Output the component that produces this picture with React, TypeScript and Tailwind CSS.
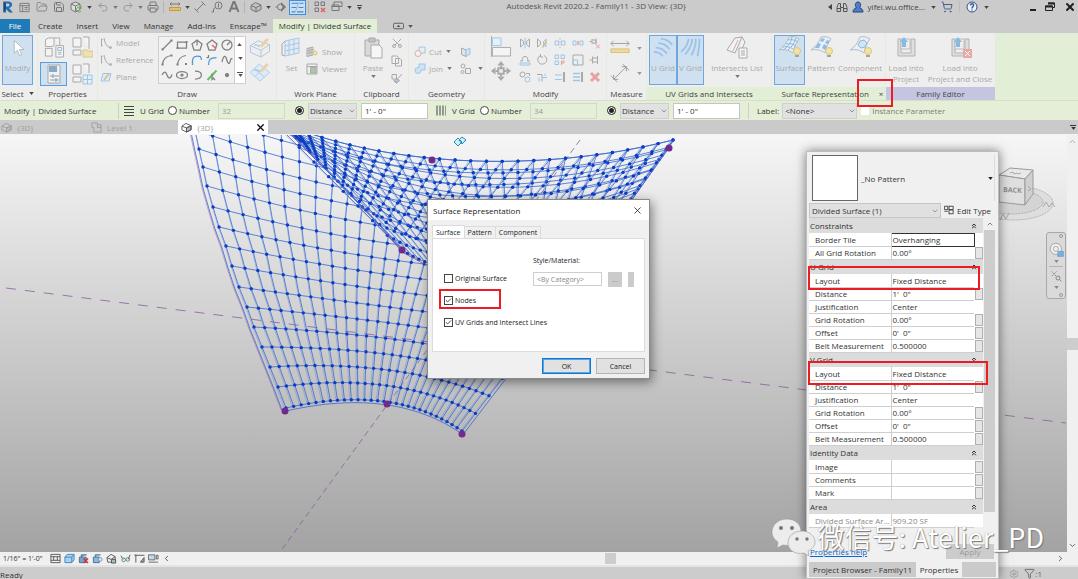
import React, { useState } from 'react';
import { Check, ChevronDown, ChevronUp, ChevronsUp, ChevronLeft, ChevronRight, Filter, FolderOpen, Printer, Redo2, Save, Scissors, Settings, ShoppingCart, Undo2, X } from 'lucide-react';

type Point = [number, number];

/* ---------- small helpers ---------- */

function Ico({ className = 'w-3 h-3', children, box = 24 }: { className?: string; children: React.ReactNode; box?: number }) {
  return (
    <svg viewBox={`0 0 ${box} ${box}`} className={`shrink-0 ${className}`} fill="none" stroke="currentColor" strokeWidth="2">
      {children}
    </svg>
  );
}

function Caret({ className = 'w-2' }: { className?: string }) {
  return (
    <span className={`flex shrink-0 justify-center ${className}`}>
      <svg viewBox="0 0 6 4" className="w-[5px] h-[3px]" fill="currentColor"><path d="M0 0h6L3 4z" /></svg>
    </span>
  );
}

function Separator() {
  return <span className="mx-[2px] h-3 w-px shrink-0 bg-[#b4b4b4]" />;
}

/* ---------- title bar ---------- */

function Tool({ label, active, children }: { label: string; active?: boolean; children: React.ReactNode }) {
  return (
    <button
      aria-label={label}
      className={`flex h-[15px] w-[17px] shrink-0 items-center justify-center ${active ? 'border border-[#3d8fdc] bg-[#c9e0f4]' : ''}`}
    >
      {children}
    </button>
  );
}

function TitleBar() {
  return (
    <header className="flex h-[19px] shrink-0 items-start justify-between text-[#777]">
      <div className="flex h-[14px] items-center">
        <button aria-label="Revit" className="flex w-4 items-center pl-[2px]">
          <Ico className="h-3 w-3">
            <path d="M3 1v22h5v-7l7 7h7l-8-9c9-2 8-13-1-13z" fill="#1f6fb5" stroke="none" />
            <path d="M8 5v6h4c4 0 4-6 0-6z" fill="#cbcbcb" stroke="none" />
            <path d="M3 1l5 4v11l-5 7z" fill="#114a86" stroke="none" />
          </Ico>
        </button>
        <Tool label="Home">
          <Ico className="h-[11px] w-[11px]"><path d="M2 3h20v18H2zM2 8h20M8 8v13M12 12h7M12 16h7" /></Ico>
        </Tool>
        <Tool label="Open"><FolderOpen className="h-3 w-3" strokeWidth={1.5} /></Tool>
        <Tool label="Save"><Save className="h-3 w-3" /></Tool>
        <Tool label="Synchronize">
          <Ico className="h-3 w-3"><path d="M11 2l9 4v11l-9 5-9-5V6z" fill="#ddd" /><path d="M2 6l9 4 9-4M11 10v11" /><path d="M22 14a5 5 0 1 0 0 6M22 10v5h-4" stroke="#6aa84f" /></Ico>
        </Tool>
        <Caret className="w-[10px] text-[#444]" />
        <Tool label="Undo"><Undo2 className="h-3 w-3 text-[#999]" /></Tool>
        <Caret />
        <Tool label="Redo"><Redo2 className="h-3 w-3 text-[#999]" /></Tool>
        <Caret />
        <Tool label="Print"><Printer className="h-3 w-3" /></Tool>
        <Separator />
        <Tool label="Measure">
          <Ico><path d="M2 6h20M5 3L2 6l3 3M19 3l3 3-3 3" /><path d="M1 13h22v6H1z" fill="#e3c06a" stroke="#c39a3c" /></Ico>
        </Tool>
        <Caret className="w-2 text-[#444]" />
        <Tool label="Aligned dimension"><Ico><path d="M4 20L20 4M1 15l8 8M15 1l8 8" /></Ico></Tool>
        <Tool label="Tag"><Ico><circle cx="15" cy="9" r="7" /><path d="M15 5v8M9 13l-4 3v6H1" /></Ico></Tool>
        <Tool label="Text"><Ico><path d="M3 22L11 2h2l8 20M7 15h10" strokeWidth="4" /></Ico></Tool>
        <Separator />
        <Tool label="Default 3D view"><Ico><path d="M2 9l9-6 11 5v9l-10 5L2 17zM2 9l10 4 10-5M12 13v9" fill="#bdbdbd" /></Ico></Tool>
        <Caret className="w-2 text-[#444]" />
        <Tool label="Section"><Ico><circle cx="11" cy="12" r="6" /><path d="M12 2l10 10-10 10z" fill="currentColor" stroke="none" /><circle cx="11" cy="12" r="4" fill="#cbcbcb" stroke="none" /><path d="M1 12h4" /></Ico></Tool>
        <Tool label="Thin lines" active>
          <Ico className="h-[13px] w-[13px]"><path d="M1 4h12M1 12h9M1 20h6M16 4h7M14 12h9M11 20h12" stroke="#4b87c0" /><path d="M15 2L7 22" stroke="#5b9bd5" strokeWidth="1" /></Ico>
        </Tool>
        <Separator />
        <Tool label="Close inactive views"><Ico><path d="M2 2h7v7H2zM14 2h7v7h-7zM2 14h7v7H2z" /><path d="M14 14l8 8M22 14l-8 8" stroke="#e06060" strokeWidth="3" /></Ico></Tool>
        <Tool label="Switch windows"><Ico><path d="M6 2h16v9H6zM2 8h14v11H2zM2 11h14" fill="#ccc" /></Ico></Tool>
        <Caret className="w-2 text-[#444]" />
        <span className="flex w-3 flex-col items-center text-[#444]">
          <span className="mb-px h-px w-[5px] bg-[#444]" />
          <Caret />
        </span>
      </div>
      <h1 className="h-[12px] text-[8px] leading-[11px] text-[#555]">Autodesk Revit 2020.2 - Family11 - 3D View: {'{3D}'}</h1>
      <div className="flex h-[14px] items-center gap-1 pr-[2px] text-[#444]">
        <svg viewBox="0 0 4 6" className="h-[6px] w-1" fill="currentColor"><path d="M4 0v6L0 3z" /></svg>
        <button aria-label="Search">
          <Ico><path d="M5 5l-3 8v8h7v-8h6v8h7v-8l-3-8h-4v8M5 5h4v8M2 15h7M15 15h7" stroke="#555" /></Ico>
        </button>
        <button className="flex items-center gap-1 text-[8px] leading-[12px]">
          <Ico><path d="M12 2c7 0 6 9 3 12 4 1 7 3 7 8H2c0-5 3-7 7-8C6 11 5 2 12 2z" fill="#4a7fd0" stroke="#2b3f77" /></Ico>
          yifei.wu.office...
          <Caret />
        </button>
        <button aria-label="App store"><ShoppingCart className="h-3 w-3 text-[#4a5f8f]" /></button>
        <span className="mx-[2px] h-3 w-px bg-[#bdbdbd]" />
        <button aria-label="Help">
          <Ico><circle cx="12" cy="12" r="10" fill="#f3f3f3" stroke="#34507e" /><path d="M9 9c0-5 7-4 6 0 0 2-3 2-3 6M12 17v2" stroke="#2263b8" strokeWidth="3" /></Ico>
        </button>
        <Caret />
        <button aria-label="Minimize" className="ml-9 mt-[6px] h-[2px] w-[6px] bg-[#222]" />
        <button aria-label="Restore" className="ml-1 text-[#222]"><Ico className="h-3 w-3"><path d="M8 4h13v9h-4M3 10h14v9H3z" /><path d="M8 5h13M3 11h14" strokeWidth="4" /></Ico></button>
        <button aria-label="Close" className="ml-1 text-[#222]"><X className="h-3 w-3" strokeWidth={4} /></button>
      </div>
    </header>
  );
}

/* ---------- ribbon ---------- */

function RibbonTabs() {
  const tabs = ['Create', 'Insert', 'View', 'Manage', 'Add-Ins', 'Enscape™'];
  return (
    <nav className="flex h-[14px] shrink-0 items-stretch text-[8px] leading-[14px] text-[#333]">
      <button className="w-[30px] bg-[#1e7bb8] text-white">File</button>
      <div className="flex gap-[14px] pl-2 pr-[6px]">
        {tabs.map((tab) => <button key={tab}>{tab}</button>)}
      </div>
      <button className="bg-[#e3eed6] px-[6px]">Modify | Divided Surface</button>
      <button aria-label="Ribbon display" className="ml-4 flex items-center gap-[2px] text-[#555]">
        <Ico className="h-3 w-[11px]"><rect x="1" y="6" width="22" height="12" rx="3" /><path d="M8 14h8l-4-5z" fill="currentColor" stroke="none" /></Ico>
        <Caret />
      </button>
    </nav>
  );
}

interface PanelProps {
  title: React.ReactNode;
  width: string;
  tone?: 'plain' | 'green' | 'violet';
  children: React.ReactNode;
}

function Panel({ title, width, tone = 'plain', children }: PanelProps) {
  const tones = { plain: '', green: 'bg-[#e3eed6]', violet: 'bg-[#c5c5e2]' };
  return (
    <section className={`relative flex shrink-0 flex-col border-r border-[#e6ebe0] bg-[#eeeeee] ${width}`}>
      <div className="flex h-[54px] gap-[2px] px-[2px] pt-[2px] text-[#a9a9a9]">{children}</div>
      <h2 className={`flex h-[13px] items-center justify-center whitespace-nowrap text-[8px] text-[#444] ${tones[tone]}`}>{title}</h2>
    </section>
  );
}

function BigButton({ icon, label, active, caret, width }: { icon: React.ReactNode; label: React.ReactNode; active?: boolean; caret?: boolean; width: string }) {
  return (
    <button
      className={`flex h-[50px] shrink-0 flex-col items-center whitespace-nowrap border text-[8px] leading-[11px] ${width} ${
        active ? 'border-[#6ea6de] bg-[#cfe0f0]' : 'border-transparent'
      }`}
    >
      <span className="mb-[3px] flex h-[23px] items-center">{icon}</span>
      {label}
      {caret && <Caret className="mt-[2px] text-[#777]" />}
    </button>
  );
}

const drawTools: { name: string; art: React.ReactNode }[] = [
  { name: 'Line', art: <><path d="M3 21L21 3" /><path d="M1 19h4v4H1zM19 1h4v4h-4z" fill="currentColor" stroke="none" /></> },
  { name: 'Rectangle', art: <><path d="M3 6h18v12H3z" /><path d="M1 16h4v4H1zM19 4h4v4h-4z" fill="currentColor" stroke="none" /></> },
  { name: 'Inscribed polygon', art: <path d="M12 2l10 8-4 12H6L2 10zM12 4v9" /> },
  { name: 'Circumscribed polygon', art: <><path d="M12 2l10 8-4 12H6L2 10z" /><path d="M12 12l8 7" stroke="#e06060" /></> },
  { name: 'Circle', art: <><circle cx="12" cy="12" r="10" /><path d="M12 12l6-6" /></> },
  { name: 'Start-end arc', art: <><path d="M3 21C4 12 10 4 21 3" /><path d="M1 19h4v4H1zM19 1h4v4h-4z" fill="currentColor" stroke="none" /></> },
  { name: 'Center-ends arc', art: <><path d="M3 21C4 12 10 4 20 3" /><path d="M18 18h4v4h-4zM1 19h4v4H1z" fill="currentColor" stroke="none" /></> },
  { name: 'Tangent arc', art: <path d="M3 22C2 10 4 4 12 4s8 2 9 8" stroke="#4f96d6" /> },
  { name: 'Fillet arc', art: <><path d="M5 22C5 12 8 7 21 7" stroke="#4f96d6" /><path d="M5 2v5h-4" /></> },
  { name: 'Spline', art: <path d="M2 16C5 2 9 2 11 10s5 12 7 6 1-8 5-6" /> },
  { name: 'Spline through points', art: <path d="M2 12C7 3 10 6 12 12s6 10 10-1" /> },
  { name: 'Ellipse', art: <><ellipse cx="12" cy="12" rx="11" ry="7" /><circle cx="12" cy="12" r="2" fill="currentColor" /></> },
  { name: 'Partial ellipse', art: <path d="M8 4c17 0 17 16 0 16" /> },
  { name: 'Pick lines', art: <><path d="M3 22L21 3" stroke="#62c462" strokeWidth="4" /><path d="M12 9v12l3-3 3 4" /></> },
  { name: 'Point', art: <circle cx="12" cy="12" r="3" fill="currentColor" /> },
];

function SurfaceArt({ pattern }: { pattern: 'grid' | 'tiles' | 'part' }) {
  return (
    <Ico className="h-[23px] w-[23px]" box={23}>
      <path d="M11 1c4-1 7 0 10 2-3 4-5 8-6 14-4-3-8-4-14-3C6 11 9 6 11 1z" fill="#e9eff4" stroke="#b4bcc4" strokeWidth="1" />
      {pattern === 'grid' && <path d="M10 4c4-1 7 0 10 2M8 8c4-1 7 0 10 2M5 11c4-1 8 0 11 3M14 1c-1 6-4 10-9 13M18 2c-2 5-4 9-8 12" stroke="#86b8e0" strokeWidth="1" />}
      {pattern === 'tiles' && <path d="M12 2l3 1-2 3-3-1zM17 4l3 1-2 3-3-1zM8 7l3 1-2 4-4 0zM14 8l3 2-2 4-3-2z" fill="#8dbde4" stroke="none" />}
      {pattern === 'part' && <path d="M11 5l4-1 3 3-2 4-4 1-3-3z" fill="#d3e5f4" stroke="#86b8e0" strokeWidth="1" />}
      <circle cx="19" cy="15" r="3.5" fill="#f3e3a4" stroke="#d9c67c" strokeWidth="1" />
      <path d="M17 20h4" stroke="#a5a5a5" />
    </Ico>
  );
}

function LoadArt({ close }: { close?: boolean }) {
  return (
    <Ico className="h-[23px] w-[23px]" box={23}>
      <path d="M3 3h3v14h10V3h4v17H3z" fill="#dedede" stroke="#b3b3b3" strokeWidth="1" />
      <path d="M6 3h9v10H6z" fill="#ededed" stroke="#bdbdbd" strokeWidth="1" />
      <path d="M9 1l4 5h-2v5H7V6H5z" fill="#84bce4" stroke="none" />
      {close && <><path d="M14 13h9v9h-9z" fill="#e6a9a4" stroke="none" /><path d="M16 15l5 5M21 15l-5 5" stroke="#fff" strokeWidth="1" /></>}
    </Ico>
  );
}

const modifyTools: { name: string; art: React.ReactNode }[] = [
  { name: 'Mirror pick axis', art: <><path d="M3 4v16l6-5V9zM21 4v16l-6-5V9z" /><path d="M12 1v22" stroke="#9cc6e6" /></> },
  { name: 'Mirror draw axis', art: <><path d="M3 4v16l6-5V9z" /><path d="M20 4v16l-5-5V9z" stroke="#9cc6e6" /><path d="M13 21l8-14" stroke="#d9b878" strokeWidth="3" /></> },
  { name: 'Split element', art: <><path d="M2 8h7v8H2zM15 8h7v8h-7z" stroke="#9cc6e6" /><path d="M12 2v20" strokeDasharray="3 3" stroke="#e7a0a0" /></> },
  { name: 'Split with gap', art: <><path d="M2 8h6v8H2zM16 8h6v8h-6z" stroke="#9cc6e6" /><path d="M12 8v8" stroke="#e7a0a0" strokeWidth="3" /></> },
  { name: 'Unpin', art: <><path d="M1 9h5M6 4v10M6 6h8v6H6M14 3v12" /><path d="M14 15l8 8M22 15l-8 8" stroke="#e7a0a0" /></> },
  { name: 'Offset', art: <><path d="M2 18h20v4H2z" stroke="#9cc6e6" /><path d="M2 14h5c-4-12 14-12 10 0h5" /></> },
  { name: 'Rotate', art: <><path d="M9 3a9 9 0 1 0 7 0" /><path d="M9 0v6h5" /></> },
  { name: 'Array', art: <><path d="M2 2h7v7H2zM14 2h7v7h-7zM2 14h7v7H2z" stroke="#9cc6e6" /><path d="M15 22v-8h5v4h-5" stroke="#e7a090" /></> },
  { name: 'Scale', art: <><path d="M2 2h20v20H2z" /><path d="M2 12h9v10H2z" stroke="#9cc6e6" /></> },
  { name: 'Pin', art: <path d="M1 12h6M7 5v14M7 8h10v8H7M17 4v16" /> },
  { name: 'Copy', art: <><circle cx="7" cy="7" r="5" /><circle cx="17" cy="17" r="5" stroke="#9cc6e6" /><path d="M14 5h7v5" /></> },
  { name: 'Trim corner', art: <><path d="M2 7h10v14" /><path d="M12 13h10M6 13v8M18 5v5" stroke="#9cc6e6" /></> },
  { name: 'Trim single', art: <><path d="M20 2v20" strokeWidth="4" /><path d="M2 8h14M2 17h14" stroke="#9cc6e6" /></> },
  { name: 'Trim multiple', art: <><path d="M20 2v20" strokeWidth="4" /><path d="M2 5h14M2 12h14M2 19h14" stroke="#9cc6e6" strokeWidth="3" /></> },
  { name: 'Delete', art: <path d="M4 4l16 16M20 4L4 20" stroke="#e8a0a0" strokeWidth="6" /> },
];

function Ribbon() {
  return (
    <div className="flex h-[67px] shrink-0 bg-[#e3eed6]">
      <Panel width="w-[38px]" title={<span className="flex items-center gap-1">Select <Caret /></span>}>
        <BigButton
          active
          width="w-[31px]"
          label="Modify"
          icon={<Ico className="h-[18px] w-[18px]"><path d="M7 2v17l4-4 3 7 3-1-3-7h6z" fill="#fff" strokeWidth="1" /></Ico>}
        />
      </Panel>

      <Panel width="w-[60px]" title="Properties">
        <div className="grid grid-cols-2 gap-x-[2px] gap-y-px">
          <button aria-label="Family category" className="flex h-[24px] w-[27px] items-center justify-center">
            <Ico className="h-[21px] w-[22px]" box={22}>
              <path d="M2 3l3-2h6v8l-2 1H2zM11 1h6v8M2 12h7v8H2z" fill="#f4f4f4" strokeWidth="1" />
              <path d="M13 9h8v12h-8z" fill="#f8f8f8" strokeWidth="1" />
              <path d="M15 11h4v3h-4zM15 16h4M15 18h4" stroke="#8fb4d6" strokeWidth="1" />
            </Ico>
          </button>
          <button aria-label="Family types" className="flex h-[24px] w-[27px] items-center justify-center">
            <Ico className="h-[22px] w-[22px]" box={22}>
              <path d="M2 2h8v9H2zM2 14h8v5H2zM12 1h6v12" fill="#f4f4f4" strokeWidth="1" />
              <path d="M12 14h4l1 1h5v6H12z" fill="#efe0b4" stroke="#dcc88c" strokeWidth="1" />
            </Ico>
          </button>
          <button aria-label="Properties" className="flex h-[24px] w-[27px] items-center justify-center border border-[#5c9ddb] bg-[#cfe0f0]">
            <Ico className="h-[20px] w-[20px]" box={20}>
              <path d="M4 1h12v18H4z" fill="#f2f2f2" strokeWidth="1" />
              <path d="M5 2h8v6H5z" fill="#8aa9c8" stroke="none" />
              <path d="M6 12h9M6 16h9M9 10v4M12 14v4" stroke="#8f9cab" strokeWidth="1" />
            </Ico>
          </button>
          <button aria-label="Type properties" className="flex h-[24px] w-[27px] items-center justify-center">
            <Ico className="h-[22px] w-[22px]" box={22}>
              <path d="M2 2h8v9H2zM2 14h8v5H2zM12 1h6v9" fill="#f4f4f4" strokeWidth="1" />
              <path d="M12 12h9v9h-9zM16.500 12v9M12 16.500h9" fill="#e2eef8" stroke="#9cc6e6" strokeWidth="1" />
            </Ico>
          </button>
        </div>
      </Panel>

      <Panel width="w-[179px]" title="Draw">
        <div className="flex w-[56px] flex-col gap-[5px] pt-[2px] text-[8px] leading-[12px]">
          {['Model', 'Reference'].map((name) => (
            <button key={name} className="flex items-center gap-1">
              <Ico><path d="M3 3v16M3 5h2M3 17h2M8 2c2 12 6 18 14 20" /><circle cx="21" cy="21" r="2" /></Ico>
              {name}
            </button>
          ))}
          <button className="flex items-center gap-1">
            <Ico><path d="M6 5h16l-4 15H2z" fill="#dcebf7" stroke="#9cc6e6" /><path d="M8 18L18 5" stroke="#e0bb80" strokeWidth="3" /></Ico>
            Plane
          </button>
        </div>
        <div className="mt-px flex h-[48px] border border-[#cfcfcf] bg-[#f1f1f1]">
          <div className="grid grid-cols-5 text-[#808080]">
            {drawTools.map((tool) => (
              <button key={tool.name} aria-label={tool.name} className="flex w-[15px] items-center justify-center">
                <Ico className="h-[12px] w-[12px] stroke-[2.5]">{tool.art}</Ico>
              </button>
            ))}
          </div>
          <div className="flex w-[11px] flex-col justify-around border-l border-[#cfcfcf] bg-white text-[#555]">
            <button aria-label="Scroll up" className="rotate-180"><Caret className="w-full" /></button>
            <button aria-label="Scroll down"><Caret className="w-full" /></button>
            <button aria-label="Expand gallery" className="mx-[2px] border-t border-[#555] pt-px"><Caret className="w-full" /></button>
          </div>
        </div>
        <div className="flex flex-col gap-[4px] pl-px pt-[2px]">
          {['Draw on face', 'Draw on work plane'].map((name, i) => (
            <button key={name} aria-label={name}>
              <Ico className="h-[21px] w-[22px]" box={22}>
                {i === 0 ? (
                  <path d="M1 9l8-5 12 4v7l-9 6-11-5zM1 9l11 5 9-6M12 14v7" fill="#e9eff4" stroke="#b9c4cd" strokeWidth="1" />
                ) : (
                  <path d="M1 11l9-9 11 9-10 9zM5 7l11 9M15 6l-9 9" fill="#deebf6" stroke="#a9cdea" strokeWidth="1" />
                )}
                <path d="M12 10l7-8" stroke="#ebd0a4" strokeWidth="3" />
                <path d="M5 9c3-3 3 2 6 0" stroke="#7fb2de" strokeWidth="1" />
              </Ico>
            </button>
          ))}
        </div>
      </Panel>

      <Panel width="w-[78px]" title="Work Plane">
        <BigButton
          width="w-[25px]"
          label="Set"
          icon={<Ico className="h-[22px] w-[22px]" box={22}><path d="M4 4l14-3v15L4 19zM8 3v15M13 2v15M4 9l14-3M4 14l14-3" fill="#dfeaf4" stroke="#a9c9e4" strokeWidth="1" /><path d="M4 4L1 7v11l3 1" strokeWidth="1" /></Ico>}
        />
        <div className="flex flex-col gap-[5px] pt-[11px] text-[8px] leading-[12px]">
          <button className="flex items-center gap-1">
            <Ico><path d="M2 5l12-3v16L2 21zM6 4v16M10 3v16M2 10l12-3M2 15l12-3" /><circle cx="18" cy="14" r="4" fill="#f3e3a4" stroke="#d9c67c" /></Ico>
            Show
          </button>
          <button className="flex items-center gap-1">
            <Ico><path d="M2 2h20v20H2zM2 7h20" /><path d="M9 9h11v11H9z" fill="#a6cba6" /></Ico>
            Viewer
          </button>
        </div>
      </Panel>

      <Panel width="w-[54px]" title="Clipboard">
        <BigButton
          caret
          width="w-[32px]"
          label="Paste"
          icon={<Ico className="h-[22px] w-[22px]" box={22}><path d="M3 3h14v16H3z" fill="#d9d9d9" strokeWidth="1" /><path d="M7 1h6v4H7z" fill="#c2c2c2" strokeWidth="1" /><path d="M9 8h8l3 3v10H9z" fill="#f6f6f6" strokeWidth="1" /></Ico>}
        />
        <div className="flex flex-col gap-[6px] pt-[2px]">
          <button aria-label="Cut to clipboard"><Scissors className="h-3 w-3 -rotate-90" /></button>
          <button aria-label="Copy to clipboard"><Ico><path d="M2 2h10l3 3v12H2zM9 7h9l3 3v12H9z" fill="#f2f2f2" /></Ico></button>
          <button aria-label="Match type"><Ico><path d="M2 3h9v9H2zM5 15l6 6" /><path d="M22 2l-8 9M7 15l5 5 5-5-5-4z" fill="#a9c9e4" /></Ico></button>
        </div>
      </Panel>

      <Panel width="w-[76px]" title="Geometry">
        <div className="grid w-full grid-cols-[46px_1fr] content-start items-center gap-y-[4px] pl-[3px] pt-[10px] text-[8px] leading-[13px]">
          <button className="flex items-center gap-[3px]">
            <Ico><path d="M10 2h12v12H10z" stroke="#9cc6e6" /><circle cx="8" cy="15" r="6" fill="#f6f0ee" stroke="#dcb0a8" /></Ico>
            Cut <Caret className="w-2 text-[#777]" />
          </button>
          <button aria-label="Wall joins" className="flex"><Ico><path d="M3 4l9 4v13l-9-4z" fill="#dde6ee" /><path d="M12 8l8-4v12l-8 5z" fill="#cfe3f4" stroke="#9cc6e6" /></Ico></button>
          <button className="flex items-center gap-[3px]">
            <Ico><path d="M10 2h12v12h-8v2a6 6 0 1 1-7-7h3z" fill="#cfe3f4" stroke="#9cc6e6" /></Ico>
            Join <Caret className="w-2 text-[#777]" />
          </button>
          <button aria-label="Demolish" className="flex items-center gap-1"><Ico><circle cx="6" cy="6" r="4" /><path d="M11 11h10v10H11z" /><circle cx="5" cy="18" r="3" /></Ico><Caret className="w-2 text-[#777]" /></button>
        </div>
      </Panel>

      <Panel width="w-[122px]" title="Modify">
        <div className="flex w-[27px] flex-col items-center gap-[3px] pt-px">
          <button aria-label="Align">
            <Ico className="h-[21px] w-[22px]" box={22}><path d="M1 0v22" strokeWidth="1" /><path d="M2 2h9v8H2z" fill="#e6f0f8" stroke="#9cc6e6" strokeWidth="1" /><path d="M2 12h19v9H2z" fill="#f4f4f4" strokeWidth="1" /></Ico>
          </button>
          <button aria-label="Move">
            <Ico className="h-[22px] w-[22px]"><path d="M12 1l4 5h-8zM12 23l4-5h-8zM1 12l5-4v8zM23 12l-5-4v8z" fill="currentColor" stroke="none" /><path d="M9 9h6v6H9zM12 6v3M12 15v3M6 12h3M15 12h3" /></Ico>
          </button>
        </div>
        <div className="grid h-[50px] flex-1 grid-cols-5 place-items-center">
          {modifyTools.map((tool) => (
            <button key={tool.name} aria-label={tool.name}>
              <Ico className="h-[12px] w-[12px]">{tool.art}</Ico>
            </button>
          ))}
        </div>
      </Panel>

      <Panel width="w-[40px]" title="Measure">
        <div className="flex flex-col gap-[5px] pt-[3px]">
          <button aria-label="Measure distance" className="flex items-center gap-1 text-[#999]">
            <Ico className="h-[20px] w-[22px]" box={22}><path d="M1 6h20M4 3L1 6l3 3M18 3l3 3-3 3" strokeWidth="1" /><path d="M1 12h20v4H1z" fill="#eedb9c" stroke="#d5bd76" strokeWidth="1" /></Ico>
            <Caret />
          </button>
          <button aria-label="Dimension" className="flex items-center gap-1 text-[#999]">
            <Ico className="h-[20px] w-[22px]" box={22}><path d="M4 18L18 4M1 14l7 7M14 1l7 7M13 4h5v5M4 13v5h5" strokeWidth="1" /></Ico>
            <Caret />
          </button>
        </div>
      </Panel>

      <Panel width="w-[125px]" tone="green" title="UV Grids and Intersects">
        <div className="flex">
          <BigButton active width="w-[28px]" label="U Grid" icon={<Ico className="h-[21px] w-[21px]"><path d="M9 2c5 0 10 3 13 7M6 7c5 0 10 3 13 7M3 12c5 0 10 3 13 7M1 17c4 0 8 2 10 5" stroke="#9cc2e8" /></Ico>} />
          <BigButton active width="w-[27px]" label="V Grid" icon={<Ico className="h-[21px] w-[21px]"><path d="M10 2C9 8 5 14 1 17M14 2c0 7-4 13-8 18M18 2c1 7-2 13-5 19M22 2c1 8-1 14-2 20" stroke="#9cc2e8" /></Ico>} />
        </div>
        <BigButton
          caret
          width="w-[62px]"
          label="Intersects List"
          icon={<Ico className="h-[23px] w-[23px]" box={23}><path d="M9 2l7-1-7 16-8-3zM16 1l3 5-6 14" fill="#f2f2f2" strokeWidth="1" /><path d="M12 4L7 15" stroke="#dfa5a0" strokeWidth="1" /><path d="M13 12h8v10h-8z" fill="#f6f6f6" strokeWidth="1" /><path d="M15 15h4M15 17h4M15 19h4" strokeWidth="1" /></Ico>}
        />
      </Panel>

      <Panel width="w-[114px]" tone="green" title={<span className="flex gap-[10px] pl-2">Surface Representation <span>×</span></span>}>
        <BigButton active width="w-[31px]" label="Surface" icon={<SurfaceArt pattern="grid" />} />
        <BigButton width="w-[28px]" label="Pattern" icon={<SurfaceArt pattern="tiles" />} />
        <BigButton width="w-[46px]" label="Component" icon={<SurfaceArt pattern="part" />} />
        <span className="absolute -right-2 top-[46px] z-10 h-[28px] w-[36px] border-2 border-[#ec1c24]" />
      </Panel>

      <Panel width="w-[110px]" tone="violet" title="Family Editor">
        <BigButton width="w-[36px]" label={<>Load into<br />Project</>} icon={<LoadArt />} />
        <BigButton width="w-[68px]" label={<>Load into<br />Project and Close</>} icon={<LoadArt close />} />
      </Panel>
    </div>
  );
}

/* ---------- options bar ---------- */

const radioClass =
  'm-0 h-[9px] w-[9px] shrink-0 appearance-none rounded-full border border-[#444] bg-white checked:bg-[#222] checked:shadow-[inset_0_0_0_1px_white]';

function GridOptions({ axis, count }: { axis: 'U' | 'V'; count: string }) {
  const [mode, setMode] = useState('distance');
  return (
    <fieldset className="flex items-center">
      <Ico className="h-[11px] w-[10px]" box={10}>
        <path d={axis === 'U' ? 'M0 1h10M0 4h10M0 7h10M0 10h10' : 'M1 0v10M4 0v10M7 0v10M10 0v10'} stroke="#444" strokeWidth="1" />
      </Ico>
      <span className="ml-[6px] w-[28px]">{axis} Grid</span>
      <label className="flex items-center gap-[2px]">
        <input type="radio" name={axis} checked={mode === 'number'} onChange={() => setMode('number')} className={radioClass} />
        <span className="w-[39px]">Number</span>
      </label>
      <input aria-label={`${axis} number`} disabled defaultValue={count} className="h-[16px] w-[67px] border border-[#d3d8cc] bg-[#e5efd8] px-[3px] text-[#999]" />
      <label className="ml-[10px] flex items-center gap-[4px]">
        <input type="radio" name={axis} checked={mode === 'distance'} onChange={() => setMode('distance')} className={radioClass} />
        <span className="relative">
          <select aria-label={`${axis} layout`} className="h-[16px] w-[49px] appearance-none border border-[#cfcfcf] bg-[#e1e1e1] px-px">
            <option>Distance</option>
          </select>
          <ChevronDown className="pointer-events-none absolute right-px top-1 h-2 w-2 text-[#666]" />
        </span>
      </label>
      <input aria-label={`${axis} distance`} defaultValue={`1' - 0"`} className="ml-[4px] h-[16px] w-[67px] border border-[#c4c4c4] bg-white px-[3px]" />
    </fieldset>
  );
}

function OptionsBar() {
  return (
    <div className="flex h-[20px] shrink-0 items-center border-t border-[#d5e0c8] bg-[#e5efd8] text-[8px] leading-[12px] text-[#333]">
      <span className="w-[118px] pl-1">Modify | Divided Surface</span>
      <span className="mr-[5px] h-4 w-px bg-[#c9d2be]" />
      <GridOptions axis="U" count="32" />
      <span className="w-2" />
      <GridOptions axis="V" count="34" />
      <span className="mx-[8px] h-4 w-px bg-[#c9d2be]" />
      <label className="flex items-center gap-[3px]">
        Label:
        <span className="relative">
          <select className="h-[16px] w-[75px] appearance-none border border-[#cfcfcf] bg-[#e1e1e1] px-[2px]">
            <option>&lt;None&gt;</option>
          </select>
          <ChevronDown className="pointer-events-none absolute right-px top-1 h-2 w-2 text-[#666]" />
        </span>
      </label>
      <label className="ml-[4px] flex items-center gap-[3px] text-[#7b8076]">
        <input type="checkbox" disabled className="h-[8px] w-[8px] appearance-none bg-white" />
        Instance Parameter
      </label>
    </div>
  );
}

function CubeGlyph() {
  return (
    <Ico className="h-[11px] w-[11px]">
      <path d="M2 9l9-6 11 5v9l-10 5L2 17zM2 9l10 4 10-5M12 13v9" />
      <path d="M12 13l10-5v9l-10 5z" fill="currentColor" fillOpacity="0.4" />
    </Ico>
  );
}

function ViewTabs() {
  return (
    <div className="flex h-[15px] shrink-0 items-stretch border-b border-[#f4f4f4] bg-[#cacaca] text-[8px] leading-[13px] text-[#a0a0a0]">
      <button className="flex w-[90px] items-center gap-[5px] pl-px"><CubeGlyph />{'{3D}'}</button>
      <button className="flex w-[88px] items-center gap-[5px] pl-px">
        <Ico className="h-[11px] w-[11px]"><path d="M2 2h12v4h8v16H6V12H2zM14 12v-6M14 12h8" /></Ico>
        Level 1
      </button>
      <div className="flex w-[90px] items-center gap-[5px] bg-white pl-[3px] pr-[2px]">
        <span className="text-[#555]"><CubeGlyph /></span>
        {'{3D}'}
        <button aria-label="Close view" className="ml-auto text-[#111]"><X className="h-[11px] w-[11px]" strokeWidth={3} /></button>
      </div>
      <button aria-label="View list" className="ml-auto mr-[2px] flex flex-col items-center justify-center text-[#333]">
        <span className="mb-px h-px w-[6px] bg-[#333]" />
        <Caret className="w-[6px]" />
      </button>
    </div>
  );
}

/* ---------- model canvas ---------- */

const lerp = (a: number, b: number, t: number) => a + (b - a) * t;

// left silhouette, bottom row first
const leftEdge: Point[] = [
  [286, 408], [278, 387], [270, 367], [262, 347], [254, 327], [247, 307], [239, 287], [232, 266], [226, 246], [219, 227],
  [213, 207], [207, 186], [203, 167], [199, 149], [195, 130], [191, 111], [188, 92], [185, 73], [183, 54],
];

function frontPoint(row: number, u: number): Point {
  const [lx, ly] = leftEdge[row];
  const rx = 462 + 13.5 * row;
  const ry = 431 - 17.6 * row;
  const bow = 4 * u * (1 - u);
  return [lerp(lx, rx, u) + 10 * bow, lerp(ly, ry, u) + (-18 + 3.4 * row) * bow];
}

function bezier(p: Point[], t: number): Point {
  const s = 1 - t;
  const at = (i: 0 | 1) => s * s * s * p[0][i] + 3 * s * s * t * p[1][i] + 3 * s * t * t * p[2][i] + t * t * t * p[3][i];
  return [at(0), at(1)];
}

const topCurve: Point[] = [[270, 118], [380, 168], [540, 174], [673, 140]];
const foldCurve: Point[] = [[292, 132], [372, 214], [420, 300], [618, 216]];
const hemCurve: Point[] = [[402, 250], [450, 282], [520, 275], [610, 228]];

function sheet(a: Point[], b: Point[], rows: number, cols: number): Point[][] {
  return Array.from({ length: rows + 1 }, (_, r) =>
    Array.from({ length: cols + 1 }, (_, c) => {
      const t = c / cols;
      const [ax, ay] = bezier(a, t);
      const [bx, by] = bezier(b, t);
      return [lerp(ax, bx, r / rows), lerp(ay, by, r / rows)] as Point;
    }),
  );
}

const toPath = (pts: Point[]) => 'M' + pts.map(([x, y]) => `${x.toFixed(1)} ${y.toFixed(1)}`).join('L');

function Mesh({ grid }: { grid: Point[][] }) {
  const columns = grid[0].map((_, c) => grid.map((row) => row[c]));
  const shifted = columns.map((col) => col.map(([x, y], i) => [x - 1.6 + i * 0.1, y] as Point));
  return (
    <g>
      <path d={[...grid, ...columns].map(toPath).join('')} stroke="#3a68cc" strokeWidth="0.8" fill="none" />
      <path d={shifted.map(toPath).join('')} stroke="#6f93dc" strokeWidth="0.5" fill="none" />
      {grid.flat().map(([x, y], i) => <circle key={i} cx={x} cy={y} r="1.7" fill="#0a3cc4" />)}
    </g>
  );
}

function ModelDrawing() {
  const front = leftEdge.map((_, r) => Array.from({ length: 29 }, (_, c) => frontPoint(r, c / 28)));
  const border = leftEdge.map(([x, y]) => [x - 4, y + 2] as Point);
  const rightBorder = front.map((row) => [row[28][0] + 3, row[28][1] + 1] as Point);
  const hem = front[0].map(([x, y]) => [x, y + 3] as Point);
  const controlPoints: Point[] = [[285, 411], [387, 404], [462, 434], [402, 250], [432, 160], [669, 148]];
  return (
    <svg className="absolute inset-0 h-full w-full">
      <defs>
        <clipPath id="front"><path d="M0 130H288L335 177L375 218L402 250L430 266H720V600H0z" /></clipPath>
      </defs>
      <g transform="translate(0 -135)">
        <path d="M6 288L1066 423" stroke="#8d5a9c" strokeWidth="0.8" strokeDasharray="10 9" />
        <path d="M580 140L280 552" stroke="#8d5a9c" strokeWidth="0.8" strokeDasharray="6 4" />
        <g clipPath="url(#front)">
          <Mesh grid={front} />
          <path d={toPath(border) + toPath(rightBorder) + toPath(hem)} stroke="#3c66cc" strokeWidth="0.8" fill="none" />
          <path d={toPath(border.map(([x, y]) => [x - 1, y]))} stroke="#a070b4" strokeWidth="0.6" fill="none" />
        </g>
        <Mesh grid={sheet(topCurve, hemCurve, 9, 27)} />
        <Mesh grid={sheet(topCurve, foldCurve, 10, 27)} />
        <path d="M288 132L335 179L375 220L402 252L430 267M669 148L600 244" stroke="#8a4a9c" strokeWidth="0.8" fill="none" />
        <path d="M674 140L600 245M288 130L402 249" stroke="#2f62d0" strokeWidth="0.8" fill="none" />
        {controlPoints.map(([x, y]) => <circle key={x} cx={x} cy={y} r="3.5" fill="#702a8c" />)}
        <path d="M454 142l4-4 4 4-4 4zM459 140l3-3 4 3-4 4z" fill="#c9f1fb" stroke="#2a86b4" strokeWidth="1" />
      </g>
    </svg>
  );
}

function ViewCube() {
  return (
    <svg viewBox="0 0 60 58" className="absolute right-[9px] top-[31px] h-[58px] w-[60px]" fill="none" stroke="#9a9a9a" strokeWidth="1">
      <ellipse cx="16" cy="37" rx="39" ry="17" fill="#dedede" strokeDasharray="2 1" strokeWidth="0.7" />
      <ellipse cx="14" cy="36" rx="31" ry="12" fill="#d4d4d4" strokeDasharray="2 1" strokeWidth="0.7" />
      <path d="M1 9L12 2l23 2-8 9z" fill="#e9e9e9" />
      <path d="M1 9l26 4v26L1 36z" fill="#dfdfdf" />
      <path d="M27 13l8-9v24l-8 11z" fill="#d0d0d0" />
      <text x="5" y="26" fontSize="7" fontWeight="bold" fill="#8d8d8d" stroke="none" transform="rotate(3 3 27)">BACK</text>
      <path d="M12 7l3-1 1 2 3-1 1 1 3-1M30 20l3 3-3 2M2 54l3-6 3 5 3-6M45 41l3-5 3 5 3-4 3 4" strokeWidth="0.8" />
    </svg>
  );
}

function NavigationBar() {
  return (
    <div className="absolute right-px top-[97px] flex h-[67px] w-[20px] flex-col items-center rounded-[3px] border border-[#a8a8a8] bg-[#dadada] text-[#888]">
      <span className="mr-[2px] mt-px h-1 w-1 self-end rounded-full border border-[#999]" />
      <button aria-label="Steering wheel" className="mt-[4px]">
        <Ico className="h-[15px] w-[15px]"><circle cx="11" cy="11" r="9" fill="#efefef" strokeWidth="1" /><circle cx="11" cy="11" r="4" strokeWidth="1" /><path d="M14 15h9v8h-9z" fill="#7fb0dc" stroke="#5d93c4" strokeWidth="1" /></Ico>
      </button>
      <Caret className="mt-[3px]" />
      <span className="my-[3px] h-px w-[14px] bg-[#b5b5b5]" />
      <button aria-label="Zoom"><Ico className="h-[12px] w-[12px]"><path d="M3 3l9 9M13 3L3 13" strokeDasharray="3 2" /><circle cx="16" cy="16" r="4" /><path d="M19 19l4 4" /></Ico></button>
      <Caret className="mt-[4px]" />
      <span className="mb-px mr-[2px] mt-auto h-1 w-1 self-end rounded-full border border-[#999]" />
    </div>
  );
}

/* ---------- dialog ---------- */

function Tick({ label, on }: { label: string; on?: boolean }) {
  const [checked, setChecked] = useState(Boolean(on));
  return (
    <label className="flex h-[13px] items-center gap-[2px] whitespace-nowrap">
      <span className="relative flex">
        <input type="checkbox" checked={checked} onChange={() => setChecked(!checked)} className="h-[9px] w-[9px] appearance-none border border-[#444] bg-white" />
        {checked && <Check className="pointer-events-none absolute left-px top-px h-[7px] w-[7px] text-[#333]" strokeWidth={3} />}
      </span>
      {label}
    </label>
  );
}

function SurfaceDialog() {
  return (
    <div role="dialog" aria-label="Surface Representation" className="absolute left-[427px] top-[64px] w-[223px] border border-[#8a8a8a] bg-[#f0f0f0] text-[7px] leading-[11px] text-[#222] shadow-[2px_3px_10px_rgba(0,0,0,0.45)]">
      <div className="flex h-[20px] items-center justify-between bg-white pl-[5px] pr-[6px]">
        <h2 className="text-[8px]">Surface Representation</h2>
        <button aria-label="Close"><X className="h-[11px] w-[11px]" strokeWidth={1.8} /></button>
      </div>
      <div className="px-[4px] pt-[5px]">
        <div className="flex items-end">
          <button className="h-[13px] border border-b-0 border-[#dcdcdc] bg-white px-[3px]">Surface</button>
          <button className="h-[12px] border border-b-0 border-l-0 border-[#dcdcdc] px-[3px]">Pattern</button>
          <button className="h-[12px] border border-b-0 border-l-0 border-[#dcdcdc] px-[3px]">Component</button>
        </div>
        <div className="relative flex h-[114px] border border-[#dcdcdc] bg-white">
          <div className="flex w-[100px] flex-col gap-[9px] pl-[11px] pt-[33px]">
            <Tick label="Original Surface" />
            <Tick label="Nodes" on />
            <Tick label="UV Grids and Intersect Lines" on />
          </div>
          <div className="pt-[16px]">
            <label htmlFor="material" className="block h-[17px]">Style/Material:</label>
            <div className="flex items-start gap-[6px]">
              <input id="material" disabled defaultValue="<By Category>" className="h-[14px] w-[69px] border border-[#cfcfcf] bg-white px-[3px] text-[#888]" />
              <button aria-label="Browse material" className="h-[15px] w-[14px] bg-[#cbcbcb] text-[#888]">...</button>
              <button aria-label="Material options" className="h-[15px] w-[6px] bg-[#cbcbcb]" />
            </div>
          </div>
          <span className="absolute left-[6px] top-[50px] h-[20px] w-[62px] border-2 border-[#ec1c24]" />
        </div>
        <div className="flex justify-end gap-[5px] pb-[4px] pt-[6px]">
          <button className="h-[16px] w-[49px] border border-[#0a78d4] bg-[#e1e1e1] ring-1 ring-inset ring-[#5aa6e4]">OK</button>
          <button className="h-[16px] w-[49px] border border-[#b5b5b5] bg-[#e1e1e1]">Cancel</button>
        </div>
      </div>
    </div>
  );
}

/* ---------- properties palette ---------- */

interface Row { name: string; value: string; button?: boolean; focused?: boolean; muted?: boolean }

const gridRows: Row[] = [
  { name: 'Layout', value: 'Fixed Distance' },
  { name: 'Distance', value: `1'  0"`, button: true },
  { name: 'Justification', value: 'Center' },
  { name: 'Grid Rotation', value: '0.00°', button: true },
  { name: 'Offset', value: `0'  0"`, button: true },
  { name: 'Belt Measurement', value: '0.500000', button: true },
];

const sections: { title: string; rows: Row[] }[] = [
  {
    title: 'Constraints',
    rows: [
      { name: 'Border Tile', value: 'Overhanging', focused: true },
      { name: 'All Grid Rotation', value: '0.00°', button: true },
    ],
  },
  { title: 'U Grid', rows: gridRows },
  { title: 'V Grid', rows: gridRows },
  {
    title: 'Identity Data',
    rows: [
      { name: 'Image', value: '', button: true },
      { name: 'Comments', value: '', button: true },
      { name: 'Mark', value: '', button: true },
    ],
  },
  { title: 'Area', rows: [{ name: 'Divided Surface Ar...', value: '909.20 SF', muted: true }] },
];

function PropertiesPalette() {
  return (
    <aside className="absolute bottom-0 right-[79px] top-[151px] z-20 flex w-[193px] flex-col border border-[#bdbdbd] bg-[#f0f0f0] px-[2px] pt-[3px] text-[8px] leading-[11px] text-[#333] shadow-[0_0_10px_rgba(0,0,0,0.5)]">
      <button className="mr-px flex items-center gap-[3px] border-r border-[#dcdcdc] pl-[3px]">
        <span className="h-[46px] w-[46px] border border-[#666] bg-white" />
        _No Pattern
        <span className="ml-auto text-[#222]"><Caret className="w-2" /></span>
      </button>
      <div className="mt-px flex h-[16px] items-center gap-[3px]">
        <span className="relative">
          <select aria-label="Selection filter" className="h-[15px] w-[132px] appearance-none border border-[#c6c6c6] bg-[#e0e0e0] px-[2px]">
            <option>Divided Surface (1)</option>
          </select>
          <ChevronDown className="pointer-events-none absolute right-[2px] top-1 h-2 w-2 text-[#777]" />
        </span>
        <button className="flex items-center gap-[3px] whitespace-nowrap">
          <Ico className="h-[10px] w-[10px]"><path d="M1 3h8v8H1zM12 2v20M12 3h10v8H12M12 12h10v9H12M1 15h8" /></Ico>
          Edit Type
        </button>
      </div>
      <div className="flex">
        <table className="w-[174px] table-fixed border-collapse">
          <colgroup><col className="w-[82px]" /><col className="w-[83px]" /><col className="w-[9px]" /></colgroup>
          {sections.map((section) => (
            <tbody key={section.title}>
              <tr className="h-[15px] bg-[#dcdcdc]">
                <th colSpan={2} className="p-0 pl-px text-left font-normal">{section.title}</th>
                <td className="p-0"><ChevronsUp className="-ml-1 h-2 w-2 text-[#333]" strokeWidth={3} /></td>
              </tr>
              {section.rows.map((row) => (
                <tr key={row.name} className={`h-[13px] bg-white ${row.muted ? 'text-[#8a8a8a]' : ''}`}>
                  <td className="whitespace-nowrap border-b border-r border-[#cfcfcf] p-0 pl-[6px]">{row.name}</td>
                  <td className={`whitespace-pre p-0 pl-px ${row.focused ? 'border border-[#333]' : 'border-b border-[#cfcfcf]'}`}>{row.value}</td>
                  <td className="p-0">
                    {row.button && <button aria-label={`Associate ${row.name}`} className="ml-px block h-[12px] w-[8px] border border-[#b0b0b0] bg-[#e6e6e6]" />}
                  </td>
                </tr>
              ))}
            </tbody>
          ))}
        </table>
        <div className="flex w-[12px] flex-col items-center bg-[#f0f0f0] pl-px">
          <ChevronUp className="my-[2px] h-2 w-2 text-[#444]" />
          <span className="mb-4 w-[11px] flex-1 bg-[#cdcdcd]" />
        </div>
      </div>
      <div className="mt-auto flex h-[16px] items-center justify-between pl-px pr-[2px]">
        <a href="#help" className="text-[#0a66cc] underline">Properties help</a>
        <button className="h-[15px] w-[48px] bg-[#cccccc] text-[#999]">Apply</button>
      </div>
      <div className="mb-px mt-[3px] flex h-[15px] items-stretch whitespace-nowrap">
        <button className="w-[107px] bg-[#cacaca]">Project Browser - Family11</button>
        <button className="w-[46px]">Properties</button>
        <span className="flex-1 bg-[#cacaca]" />
      </div>
      <span className="absolute left-px top-[114px] h-[24px] w-[172px] border-2 border-[#ec1c24]" />
      <span className="absolute left-px top-[209px] h-[24px] w-[180px] border-2 border-[#ec1c24]" />
    </aside>
  );
}

/* ---------- bottom bars ---------- */

function ViewControlBar() {
  return (
    <div className="flex h-[13px] shrink-0 items-center gap-[3px] bg-[#f0f0f0] pl-[3px] text-[7px] leading-[12px] text-[#333]">
      <button className="w-[44px] whitespace-nowrap text-left">1/16" = 1'-0"</button>
      <button aria-label="Detail level"><Ico className="h-[11px] w-[11px]"><path d="M2 3h20v18H2zM2 8h20M2 16h20M8 8v8M16 8v8" stroke="#555" /></Ico></button>
      <button aria-label="Visual style"><Ico className="h-[11px] w-[11px]"><path d="M2 9l5-6h15v12l-5 6H2zM2 9h15v12M17 9l5-6" fill="#a9d3f2" stroke="#3c86c0" /></Ico></button>
      <button aria-label="Sun path off"><Ico className="h-[11px] w-[11px]"><path d="M3 9h15v12H3zM7 9V4h12" fill="#6da6d6" stroke="#4a6d90" /><path d="M12 12l10 10M22 12L12 22" stroke="#d83030" strokeWidth="3" /></Ico></button>
      <button aria-label="Crop view"><Ico className="h-[11px] w-[11px]"><path d="M3 9h13v12H3zM7 9V4h12" fill="#8ab8de" stroke="#4a6d90" /><circle cx="18" cy="14" r="4" fill="#dceaf6" stroke="#6f94b6" /></Ico></button>
      <button aria-label="Lock 3D view"><Ico className="h-[11px] w-[11px]"><path d="M2 10l9-7 9 5v12H4zM2 10l9 4 9-6" stroke="#555" /><path d="M12 14h9v8h-9z" fill="#9cc4b4" stroke="#555" /></Ico></button>
      <button aria-label="Temporary hide"><Ico className="h-[11px] w-[11px]"><path d="M2 6l5 8M22 4l-4 10" stroke="#555" /><circle cx="8" cy="15" r="4" stroke="#5a8878" /><circle cx="17" cy="14" r="4" stroke="#5a8878" /></Ico></button>
      <button aria-label="Reveal hidden"><Ico className="h-[11px] w-[11px]"><path d="M4 3v18M1 5h22M14 20l8-10v10z" stroke="#555" fill="#aaa" /></Ico></button>
      <button aria-label="Worksharing display"><Ico className="h-[11px] w-[11px]"><path d="M1 4h14v11H1zM1 20h21M18 5h4v8h-4z" stroke="#666" fill="#c5d8ea" /></Ico></button>
      <ChevronLeft className="h-[9px] w-[9px]" />
      <div className="flex h-full flex-1 items-center">
        <span className="ml-[49%] h-[11px] w-[11px] bg-[#cdcdcd]" />
      </div>
      <ChevronRight className="mr-[13px] h-[9px] w-[9px]" />
    </div>
  );
}

function StatusBar() {
  return (
    <footer className="flex h-[14px] shrink-0 items-end justify-between overflow-hidden border-t-2 border-[#e4e4e4] bg-[#cccccc] text-[8px] leading-[8px] text-[#333]">
      <span>Ready</span>
      <span className="mr-[36px] flex items-center gap-[5px] text-[#666]">
        <Settings className="h-[10px] w-[10px] text-[#999]" />
        <span className="flex items-center"><Filter className="h-[11px] w-[11px]" />:1</span>
      </span>
    </footer>
  );
}

function Watermark() {
  return (
    <div className="pointer-events-none absolute bottom-[23px] right-[34px] z-30 flex items-center gap-px">
      <svg viewBox="0 0 45 38" className="h-[38px] w-[45px]" fill="#ececec" stroke="#999" strokeWidth="0.6">
        <path d="M16 1C7 1 1 7 1 14c0 5 3 8 6 10l-1 6 6-3c9 2 18-2 18-13C30 6 24 1 16 1z" />
        <path d="M31 13c-8 0-14 5-14 12s7 12 16 10l5 3-1-5c4-2 7-5 7-9 0-6-6-11-13-11z" />
        <g fill="#777" stroke="none"><circle cx="10" cy="10" r="2" /><circle cx="21" cy="10" r="2" /><circle cx="26" cy="21" r="1.700" /><circle cx="36" cy="21" r="1.700" /></g>
      </svg>
      <span className="whitespace-nowrap font-['Noto_Sans_CJK_SC',sans-serif] text-[27px] font-normal leading-[38px] text-white [text-shadow:1px_1px_1px_#777,0_0_1px_#888]">
        微信号: Atelier_PD
      </span>
    </div>
  );
}

export default function App() {
  return (
    <div className="relative flex h-screen w-full flex-col overflow-hidden bg-[#cbcbcb] font-['Open_Sans','Noto_Sans',sans-serif]">
      <TitleBar />
      <RibbonTabs />
      <Ribbon />
      <OptionsBar />
      <ViewTabs />
      <main className="flex min-h-0 flex-1">
        <div className="relative min-w-0 flex-1 overflow-hidden bg-linear-to-b from-[#f6f6f6] to-[#a3a3a3]">
          <ModelDrawing />
          <ViewCube />
          <NavigationBar />
          <SurfaceDialog />
        </div>
        <div className="flex w-[11px] shrink-0 flex-col items-center justify-between bg-[#f0f0f0] py-[2px] text-[#444]">
          <ChevronUp className="h-[9px] w-[9px] text-[#999]" />
          <span className="h-[12px] w-[11px] bg-[#cdcdcd]" />
          <ChevronDown className="h-[9px] w-[9px]" />
        </div>
      </main>
      <ViewControlBar />
      <StatusBar />
      <PropertiesPalette />
      <Watermark />
    </div>
  );
}
